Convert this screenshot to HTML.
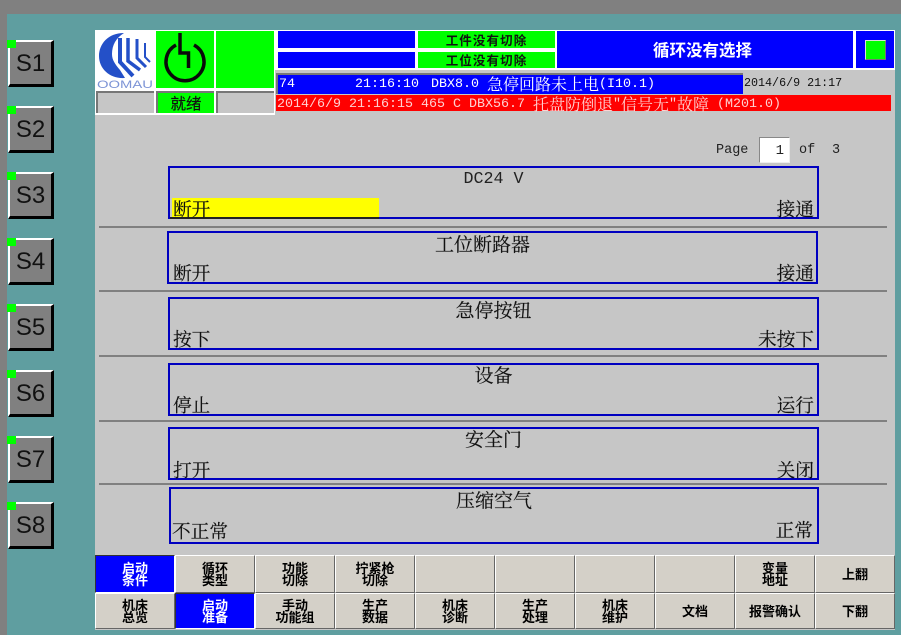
<!DOCTYPE html>
<html lang="zh"><head><meta charset="utf-8"><style>
html,body{margin:0;padding:0;width:901px;height:635px;overflow:hidden}
body{position:relative;background:#5f9ea0;font-family:"Liberation Sans","Noto Serif CJK SC",serif}
div{position:absolute;box-sizing:border-box;white-space:nowrap}
.s{left:8px;width:46px;height:47px;background:#808080;border:solid;border-width:2px 3px 3px 2px;border-color:#fff #000 #000 #fff;color:#111;font:24px/44px "Liberation Sans",sans-serif;text-align:center}
.m{left:7px;width:9px;height:8px;background:#00ff00}
.r{border:2px solid #0000c0;height:53px}
.l{font:18.7px/20px "Noto Serif CJK SC",serif;color:#111;-webkit-text-stroke:.15px #111}
.t{font:19px/20px "Noto Serif CJK SC",serif;color:#111;text-align:center;-webkit-text-stroke:.15px #111}
.sep{left:99px;width:788px;height:2px;background:#808080}
.b{width:80px;background:#d4d0c8;border:1px solid;border-color:#fff #666 #666 #fff;color:#000;font:bold 13px/12.5px "Noto Sans CJK SC",sans-serif;text-align:center;display:flex;align-items:center;justify-content:center}
.on{background:#0000ff;color:#fff;border-color:#333 #fff #fff #333}
.sb{background:#0000ff}
.g{background:#00ff00;color:#111;font:bold 12.5px/17px "Noto Sans CJK SC",sans-serif;text-align:center;letter-spacing:1.1px}
.mono{font-family:"Liberation Mono","Noto Serif CJK SC",monospace}
.a{font:13.33px/18px "Liberation Mono",monospace;color:#fff}
.a span{font:16px/0 "Noto Serif CJK SC",serif;position:relative;top:3px}
</style></head><body>
<div style="left:0;top:0;width:901px;height:14px;background:#808080"></div>
<div style="left:0;top:0;width:7px;height:635px;background:#808080"></div>

<div class="s" style="top:40px">S1</div><div class="m" style="top:40px"></div>
<div class="s" style="top:106px">S2</div><div class="m" style="top:106px"></div>
<div class="s" style="top:172px">S3</div><div class="m" style="top:172px"></div>
<div class="s" style="top:238px">S4</div><div class="m" style="top:238px"></div>
<div class="s" style="top:304px">S5</div><div class="m" style="top:304px"></div>
<div class="s" style="top:370px">S6</div><div class="m" style="top:370px"></div>
<div class="s" style="top:436px">S7</div><div class="m" style="top:436px"></div>
<div class="s" style="top:502px">S8</div><div class="m" style="top:502px"></div>

<!-- main panel -->
<div style="left:95px;top:114px;width:800px;height:516px;background:#c6c6c6"></div>
<div style="left:275px;top:70px;width:620px;height:44px;background:#c6c6c6"></div>

<!-- status block -->
<div style="left:95px;top:30px;width:180px;height:85px;background:#fff"></div>
<svg style="position:absolute;left:95px;top:31px" width="61" height="59" viewBox="0 0 61 59">
<path d="M29 2C13 2 4 13 4 25C4 38 15 48 30 47L25 39C20 33 17 29 17 23C17 14 21 7 29 2Z" fill="#2450c8"/>
<g fill="none" stroke="#2450c8">
<path d="M25 7V31L38 45" stroke-width="4"/>
<path d="M33 7V30L45 39" stroke-width="3.5"/>
<path d="M42 8V27L51 36" stroke-width="3"/>
<path d="M50 12V26L55 31" stroke-width="2"/>
</g>
<text x="2" y="57" font-family="Liberation Sans,sans-serif" font-size="11" fill="#7d94d6" textLength="56" lengthAdjust="spacingAndGlyphs">OOMAU</text>
</svg>
<div style="left:156px;top:31px;width:58px;height:57px;background:#00ff00"></div>
<svg style="position:absolute;left:156px;top:31px" width="58" height="57" viewBox="0 0 58 57">
<path d="M20 14A19 19 0 1 0 38 14" fill="none" stroke="#0a0a0a" stroke-width="3.5"/>
<path d="M24 2V22H32.500V37" fill="none" stroke="#0a0a0a" stroke-width="3.5"/>
</svg>
<div style="left:216px;top:31px;width:58px;height:57px;background:#00ff00"></div>
<div style="left:96px;top:91px;width:58px;height:22px;background:#c6c6c6;border-top:2px solid #777;border-left:2px solid #777"></div>
<div style="left:156px;top:91px;width:58px;height:22px;background:#00ff00;border-top:2px solid #777;border-left:2px solid #777;color:#111;font:15.500px/21px 'Noto Sans CJK SC',sans-serif;text-align:center;-webkit-text-stroke:.2px #111">就绪</div>
<div style="left:216px;top:91px;width:58px;height:22px;background:#c6c6c6;border-top:2px solid #777;border-left:2px solid #777"></div>

<!-- top strip -->
<div style="left:275px;top:30px;width:620px;height:40px;background:#fff"></div>
<div class="sb" style="left:278px;top:31px;width:137px;height:17px"></div>
<div class="sb" style="left:278px;top:52px;width:137px;height:16px"></div>
<div class="g" style="left:418px;top:31px;width:137px;height:17px">工件没有切除</div>
<div class="g" style="left:418px;top:52px;width:137px;height:16px;line-height:15px">工位没有切除</div>
<div class="sb" style="left:557px;top:31px;width:296px;height:37px;color:#fff;font:bold 16.500px/37px 'Noto Sans CJK SC',sans-serif;text-align:center;padding-right:5px">循环没有选择</div>
<div class="sb" style="left:856px;top:31px;width:38px;height:37px"></div>
<div style="left:865px;top:40px;width:21px;height:20px;background:#00ff00;border:1px solid;border-color:#ddd #777 #777 #ddd"></div>

<!-- alarms -->
<div class="sb" style="left:276px;top:73px;width:467px;height:21px;border-top:2px solid #777;border-left:2px solid #777"></div>
<div class="a" style="left:279px;top:76px">74</div>
<div class="a" style="left:355px;top:76px">21:16:10</div>
<div class="a" style="left:431px;top:76px">DBX8.0 <span>急停回路未上电</span>(I10.1)</div>
<div class="mono" style="left:744px;top:75px;font-size:11.7px;line-height:17px;color:#111">2014/6/9 21:17</div>
<div style="left:276px;top:95px;width:615px;height:16px;background:#ff0000"></div>
<div class="a" style="left:277px;top:96px;color:#ffd0d0">2014/6/9 21:16:15 465 C DBX56.7 <span>托盘防倒退</span>"<span>信号无</span>"<span>故障</span> (M201.0)</div>

<!-- page -->
<div class="mono" style="left:716px;top:142px;font-size:13.5px;line-height:18px;color:#222">Page</div>
<div class="mono" style="left:759px;top:137px;width:31px;height:26px;background:#fff;border:1px solid;border-color:#888 #eee #eee #888;font-size:14px;line-height:26px;text-align:right;padding-right:5px;color:#222">1</div>
<div class="mono" style="left:799px;top:142px;font-size:13.5px;line-height:18px;color:#222">of</div>
<div class="mono" style="left:832px;top:142px;font-size:13.5px;line-height:18px;color:#222">3</div>

<!-- rows -->
<div class="r" style="left:168px;top:166px;width:651px"></div>
<div style="left:172px;top:198px;width:207px;height:19px;background:#ffff00"></div>
<div style="left:170px;top:217px;width:209px;height:2px;background:#222"></div>
<div class="mono" style="left:168px;top:170px;width:651px;font-size:16.67px;line-height:20px;color:#222;text-align:center">DC24 V</div>
<div class="l" style="left:173px;top:199px">断开</div><div class="l" style="right:87px;top:199px">接通</div>
<div class="sep" style="top:226px"></div>

<div class="r" style="left:167px;top:231px;width:651px"></div>
<div class="t" style="left:167px;top:234px;width:631px">工位断路器</div>
<div class="l" style="left:173px;top:263px">断开</div><div class="l" style="right:87px;top:263px">接通</div>
<div class="sep" style="top:290px"></div>

<div class="r" style="left:168px;top:297px;width:651px"></div>
<div class="t" style="left:168px;top:300px;width:651px">急停按钮</div>
<div class="l" style="left:173px;top:329px">按下</div><div class="l" style="right:87px;top:329px">未按下</div>
<div class="sep" style="top:355px"></div>

<div class="r" style="left:168px;top:363px;width:651px"></div>
<div class="t" style="left:168px;top:365px;width:651px">设备</div>
<div class="l" style="left:173px;top:395px">停止</div><div class="l" style="right:87px;top:395px">运行</div>
<div class="sep" style="top:420px"></div>

<div class="r" style="left:168px;top:427px;width:651px"></div>
<div class="t" style="left:168px;top:429px;width:651px">安全门</div>
<div class="l" style="left:173px;top:460px">打开</div><div class="l" style="right:87px;top:460px">关闭</div>
<div class="sep" style="top:483px"></div>

<div class="r" style="left:169px;top:487px;width:650px;height:57px"></div>
<div class="t" style="left:169px;top:490px;width:650px">压缩空气</div>
<div class="l" style="left:172px;top:521px">不正常</div><div class="l" style="right:88px;top:520px">正常</div>

<!-- buttons -->
<div class="b on" style="left:95px;top:555px;height:38px">启动<br>条件</div>
<div class="b" style="left:175px;top:555px;height:38px">循环<br>类型</div>
<div class="b" style="left:255px;top:555px;height:38px">功能<br>切除</div>
<div class="b" style="left:335px;top:555px;height:38px">拧紧枪<br>切除</div>
<div class="b" style="left:415px;top:555px;height:38px"></div>
<div class="b" style="left:495px;top:555px;height:38px"></div>
<div class="b" style="left:575px;top:555px;height:38px"></div>
<div class="b" style="left:655px;top:555px;height:38px"></div>
<div class="b" style="left:735px;top:555px;height:38px">变量<br>地址</div>
<div class="b" style="left:815px;top:555px;height:38px">上翻</div>
<div class="b" style="left:95px;top:593px;height:36px">机床<br>总览</div>
<div class="b on" style="left:175px;top:593px;height:36px">启动<br>准备</div>
<div class="b" style="left:255px;top:593px;height:36px">手动<br>功能组</div>
<div class="b" style="left:335px;top:593px;height:36px">生产<br>数据</div>
<div class="b" style="left:415px;top:593px;height:36px">机床<br>诊断</div>
<div class="b" style="left:495px;top:593px;height:36px">生产<br>处理</div>
<div class="b" style="left:575px;top:593px;height:36px">机床<br>维护</div>
<div class="b" style="left:655px;top:593px;height:36px">文档</div>
<div class="b" style="left:735px;top:593px;height:36px">报警确认</div>
<div class="b" style="left:815px;top:593px;height:36px">下翻</div>
</body></html>
